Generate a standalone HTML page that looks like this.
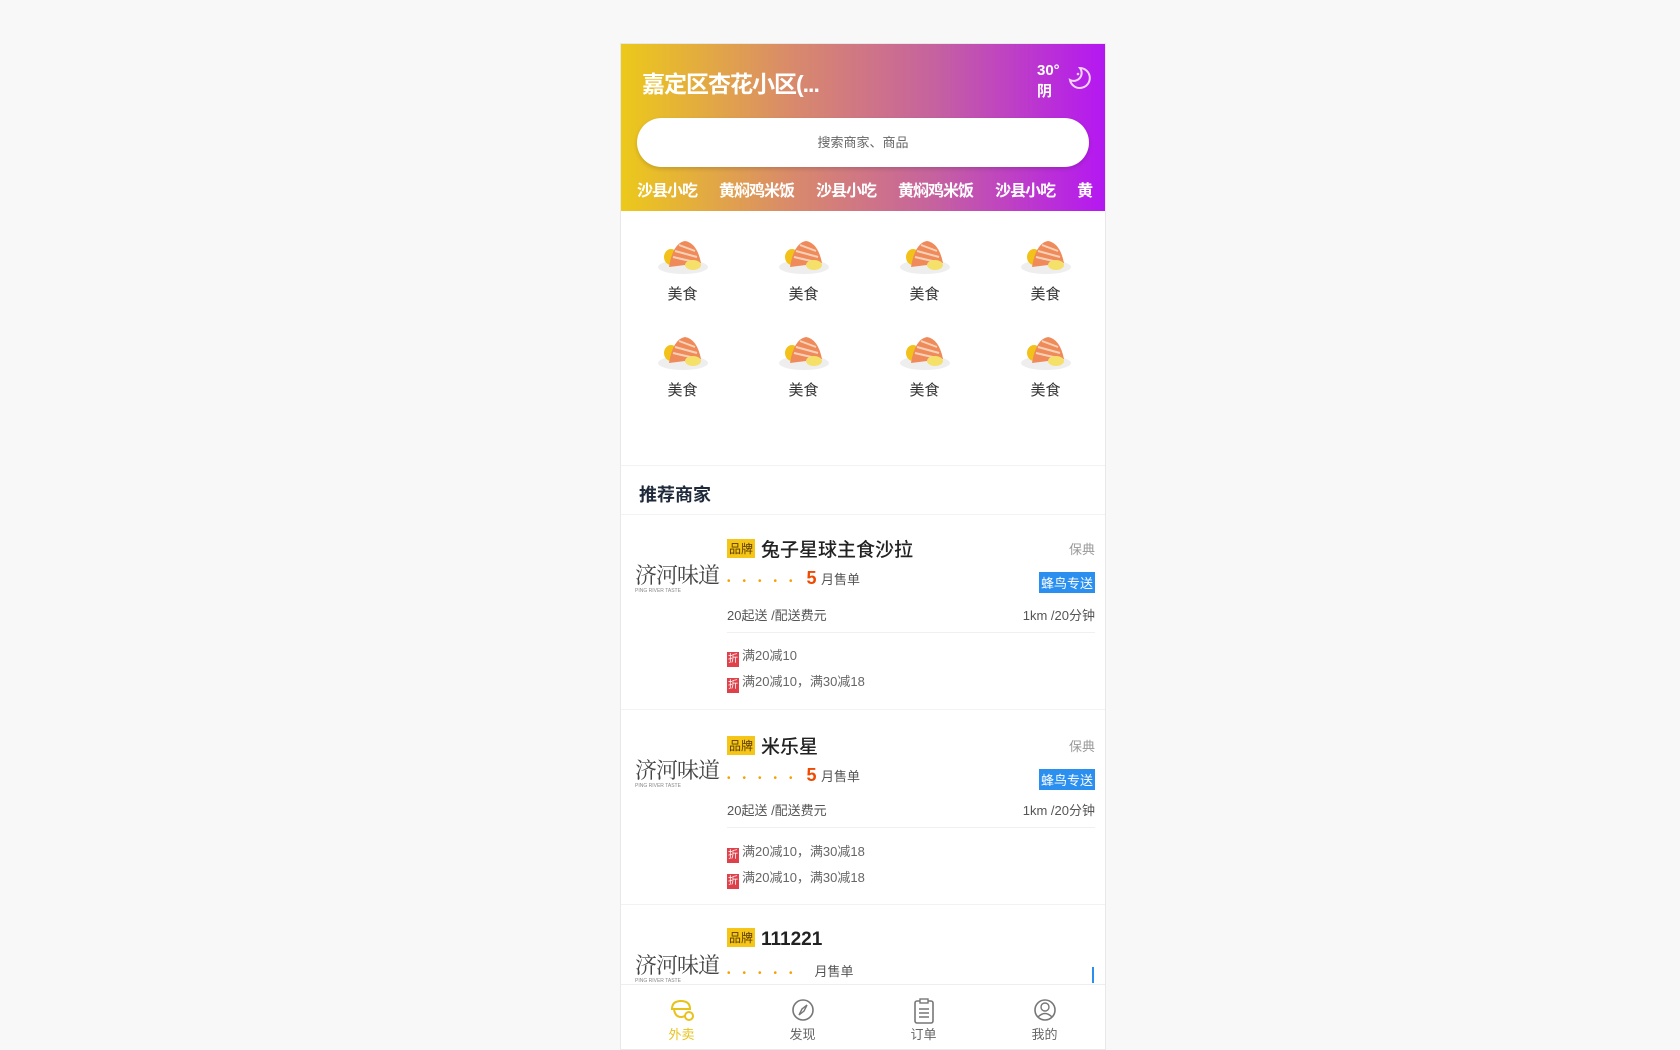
<!DOCTYPE html>
<html><head><meta charset="utf-8"><style>
*{margin:0;padding:0;box-sizing:border-box}
body{width:1680px;height:1050px;background:#f8f8f8;position:relative;overflow:hidden;font-family:"Liberation Sans","Noto Sans CJK SC",sans-serif}
.ph{position:absolute;left:620px;top:43px;width:486px;height:1007px;background:#fff;border:1px solid #e8e8e8;overflow:hidden}
.hd{position:absolute;left:0;top:0;width:486px;height:167px;background:linear-gradient(90deg,#ecc91a 0%,#d98a6b 35%,#c561a0 65%,#b416f3 100%)}
.ab{position:absolute;white-space:nowrap}
.title{left:21px;top:21px;color:#fff;font-size:23px;font-weight:bold;letter-spacing:-1px}
.srch{left:16px;top:74px;width:452px;height:49px;background:#fff;border-radius:25px;box-shadow:0 2px 4px rgba(0,0,0,.15);text-align:center;line-height:49px;font-size:13px;color:#666}
.tags{left:16px;top:133px;color:#fff;font-size:16px;font-weight:bold;letter-spacing:-1px}
.tags span{margin-right:22px}
.cell{position:absolute;width:121px;text-align:center}
.food{width:52px;height:40px;margin:0 auto;position:relative}
.lbl{font-size:15px;color:#333;margin-top:6px}
.card{position:absolute;left:0;width:486px;height:195px;border-top:1px solid #f2f2f2}
.logo{position:absolute;left:14px;font-size:22px;color:#444;font-family:"Noto Serif CJK SC",serif;letter-spacing:-1px}
.logo small{display:block;font-size:5px;color:#888;letter-spacing:0;font-family:"Liberation Sans",sans-serif;margin-top:-2px}
.pp{display:inline-block;background:#f5c518;color:#5a3b00;font-size:12px;padding:1px 2px;margin-right:6px;vertical-align:3px}
.nm{font-size:19px;color:#222;font-weight:500}
.stars{color:#f5a000;font-size:10px;letter-spacing:12px}
.five{color:#f04a00;font-size:18px;font-weight:bold;margin-left:2px}
.sm{font-size:13px;color:#555}
.fn{display:inline-block;background:#e0404a;color:#fff;font-size:10px;width:12px;height:15px;line-height:15px;text-align:center;margin-right:3px;vertical-align:-2px}
.blue{background:#2b8ff0;color:#fff;font-size:13px;padding:1px 2px}
.nav{position:absolute;left:0;top:940px;width:486px;height:67px;background:#fff;border-top:1px solid #eee}
.ni{position:absolute;width:121px;text-align:center;top:12px;font-size:13px;color:#666}
</style></head><body>
<div class="ph">
<div class="hd">
<div class="ab title">嘉定区杏花小区(...</div>
<div class="ab" style="left:416px;top:16px;color:#fff;font-size:15px;font-weight:bold;line-height:21px">30°<br>阴</div>
<div class="ab" style="left:445px;top:21px"><svg width="26" height="26" viewBox="0 0 26 26"><path d="M14 3 A10 10 0 1 1 4 15 A8 8 0 0 0 14 3Z" fill="none" stroke="#f3d5ff" stroke-width="2"/><circle cx="12" cy="9" r="1.3" fill="#f3d5ff"/></svg></div>
<div class="ab srch">搜索商家、商品</div>
<div class="ab tags"><span>沙县小吃</span><span>黄焖鸡米饭</span><span>沙县小吃</span><span>黄焖鸡米饭</span><span>沙县小吃</span><span>黄</span></div>
</div>
<div class="cell" style="left:1px;top:193px"><div class="food"><svg width="52" height="40"><ellipse cx="26" cy="30" rx="25" ry="7" fill="#eee"/><ellipse cx="14" cy="20" rx="7" ry="8" fill="#f2c21a"/><path d="M12 30 Q16 6 28 4 Q40 6 44 26 Z" fill="#ef8a5a"/><path d="M18 14 L40 20 M16 20 L42 26 M22 8 L38 14" stroke="#fbd2b8" stroke-width="2"/><ellipse cx="36" cy="28" rx="8" ry="5" fill="#f5e06a"/></svg></div><div class="lbl">美食</div></div>
<div class="cell" style="left:122px;top:193px"><div class="food"><svg width="52" height="40"><ellipse cx="26" cy="30" rx="25" ry="7" fill="#eee"/><ellipse cx="14" cy="20" rx="7" ry="8" fill="#f2c21a"/><path d="M12 30 Q16 6 28 4 Q40 6 44 26 Z" fill="#ef8a5a"/><path d="M18 14 L40 20 M16 20 L42 26 M22 8 L38 14" stroke="#fbd2b8" stroke-width="2"/><ellipse cx="36" cy="28" rx="8" ry="5" fill="#f5e06a"/></svg></div><div class="lbl">美食</div></div>
<div class="cell" style="left:243px;top:193px"><div class="food"><svg width="52" height="40"><ellipse cx="26" cy="30" rx="25" ry="7" fill="#eee"/><ellipse cx="14" cy="20" rx="7" ry="8" fill="#f2c21a"/><path d="M12 30 Q16 6 28 4 Q40 6 44 26 Z" fill="#ef8a5a"/><path d="M18 14 L40 20 M16 20 L42 26 M22 8 L38 14" stroke="#fbd2b8" stroke-width="2"/><ellipse cx="36" cy="28" rx="8" ry="5" fill="#f5e06a"/></svg></div><div class="lbl">美食</div></div>
<div class="cell" style="left:364px;top:193px"><div class="food"><svg width="52" height="40"><ellipse cx="26" cy="30" rx="25" ry="7" fill="#eee"/><ellipse cx="14" cy="20" rx="7" ry="8" fill="#f2c21a"/><path d="M12 30 Q16 6 28 4 Q40 6 44 26 Z" fill="#ef8a5a"/><path d="M18 14 L40 20 M16 20 L42 26 M22 8 L38 14" stroke="#fbd2b8" stroke-width="2"/><ellipse cx="36" cy="28" rx="8" ry="5" fill="#f5e06a"/></svg></div><div class="lbl">美食</div></div>
<div class="cell" style="left:1px;top:289px"><div class="food"><svg width="52" height="40"><ellipse cx="26" cy="30" rx="25" ry="7" fill="#eee"/><ellipse cx="14" cy="20" rx="7" ry="8" fill="#f2c21a"/><path d="M12 30 Q16 6 28 4 Q40 6 44 26 Z" fill="#ef8a5a"/><path d="M18 14 L40 20 M16 20 L42 26 M22 8 L38 14" stroke="#fbd2b8" stroke-width="2"/><ellipse cx="36" cy="28" rx="8" ry="5" fill="#f5e06a"/></svg></div><div class="lbl">美食</div></div>
<div class="cell" style="left:122px;top:289px"><div class="food"><svg width="52" height="40"><ellipse cx="26" cy="30" rx="25" ry="7" fill="#eee"/><ellipse cx="14" cy="20" rx="7" ry="8" fill="#f2c21a"/><path d="M12 30 Q16 6 28 4 Q40 6 44 26 Z" fill="#ef8a5a"/><path d="M18 14 L40 20 M16 20 L42 26 M22 8 L38 14" stroke="#fbd2b8" stroke-width="2"/><ellipse cx="36" cy="28" rx="8" ry="5" fill="#f5e06a"/></svg></div><div class="lbl">美食</div></div>
<div class="cell" style="left:243px;top:289px"><div class="food"><svg width="52" height="40"><ellipse cx="26" cy="30" rx="25" ry="7" fill="#eee"/><ellipse cx="14" cy="20" rx="7" ry="8" fill="#f2c21a"/><path d="M12 30 Q16 6 28 4 Q40 6 44 26 Z" fill="#ef8a5a"/><path d="M18 14 L40 20 M16 20 L42 26 M22 8 L38 14" stroke="#fbd2b8" stroke-width="2"/><ellipse cx="36" cy="28" rx="8" ry="5" fill="#f5e06a"/></svg></div><div class="lbl">美食</div></div>
<div class="cell" style="left:364px;top:289px"><div class="food"><svg width="52" height="40"><ellipse cx="26" cy="30" rx="25" ry="7" fill="#eee"/><ellipse cx="14" cy="20" rx="7" ry="8" fill="#f2c21a"/><path d="M12 30 Q16 6 28 4 Q40 6 44 26 Z" fill="#ef8a5a"/><path d="M18 14 L40 20 M16 20 L42 26 M22 8 L38 14" stroke="#fbd2b8" stroke-width="2"/><ellipse cx="36" cy="28" rx="8" ry="5" fill="#f5e06a"/></svg></div><div class="lbl">美食</div></div>

<div class="ab" style="left:0;top:421px;width:486px;height:1px;background:#f2f2f2"></div>
<div class="ab" style="left:18px;top:437px;font-size:18px;font-weight:bold;color:#1e2a3a">推荐商家</div>

<div class="card" style="top:470px">
<div class="logo" style="top:44px">济河味道<small>PING RIVER TASTE</small></div>
<div class="ab" style="left:106px;top:20px"><span class="pp">品牌</span><span class="nm">兔子星球主食沙拉</span></div>
<div class="ab sm" style="right:12px;top:24px;color:#999">保典</div>
<div class="ab" style="left:106px;top:53px"><span class="stars">•••••</span><span class="five">5</span> <span class="sm">月售单</span></div>
<div class="ab blue" style="right:12px;top:57px">蜂鸟专送</div>
<div class="ab sm" style="left:106px;top:90px">20起送 /配送费元</div>
<div class="ab sm" style="right:12px;top:90px">1km /20分钟</div>
<div class="ab" style="left:106px;top:117px;width:368px;height:1px;background:#f0f0f0"></div>
<div class="ab sm" style="left:106px;top:130px;color:#666"><span class="fn">折</span>满20减10</div>
<div class="ab sm" style="left:106px;top:156px;color:#666"><span class="fn">折</span>满20减10，满30减18</div>
</div>
<div class="card" style="top:665px">
<div class="logo" style="top:44px">济河味道<small>PING RIVER TASTE</small></div>
<div class="ab" style="left:106px;top:22px"><span class="pp">品牌</span><span class="nm">米乐星</span></div>
<div class="ab sm" style="right:12px;top:26px;color:#999">保典</div>
<div class="ab" style="left:106px;top:55px"><span class="stars">•••••</span><span class="five">5</span> <span class="sm">月售单</span></div>
<div class="ab blue" style="right:12px;top:59px">蜂鸟专送</div>
<div class="ab sm" style="left:106px;top:90px">20起送 /配送费元</div>
<div class="ab sm" style="right:12px;top:90px">1km /20分钟</div>
<div class="ab" style="left:106px;top:117px;width:368px;height:1px;background:#f0f0f0"></div>
<div class="ab sm" style="left:106px;top:131px;color:#666"><span class="fn">折</span>满20减10，满30减18</div>
<div class="ab sm" style="left:106px;top:157px;color:#666"><span class="fn">折</span>满20减10，满30减18</div>
</div>
<div class="card" style="top:860px">
<div class="logo" style="top:44px">济河味道<small>PING RIVER TASTE</small></div>
<div class="ab" style="left:106px;top:23px"><span class="pp">品牌</span><span class="nm" style="font-weight:bold">111221</span></div>
<div class="ab" style="left:106px;top:56px"><span class="stars">•••••</span><span class="sm" style="margin-left:10px">月售单</span></div>
<div class="ab" style="left:471px;top:62px;width:2px;height:16px;background:#2b8ff0"></div>
</div>

<div class="nav">
<div class="ni" style="left:0;color:#e8c21a"><svg width="26" height="26" viewBox="0 0 26 26"><path d="M3 12 Q3 4 12 4 Q21 4 21 12 Z M3 12 H21 M5 12 Q6 20 12 20 Q15 20 17 18" fill="none" stroke="#e8c21a" stroke-width="2"/><circle cx="20" cy="19" r="4" fill="#fff" stroke="#e8c21a" stroke-width="2"/></svg><div style="margin-top:-2px">外卖</div></div>
<div class="ni" style="left:121px"><svg width="26" height="26" viewBox="0 0 26 26"><circle cx="13" cy="13" r="10" fill="none" stroke="#777" stroke-width="1.6"/><path d="M17 8 L12 12 L9 18 L14 14 Z" fill="none" stroke="#777" stroke-width="1.4"/></svg><div style="margin-top:-2px">发现</div></div>
<div class="ni" style="left:242px"><svg width="26" height="28" viewBox="0 0 26 28"><rect x="4" y="4" width="18" height="22" rx="2" fill="none" stroke="#777" stroke-width="1.6"/><rect x="9" y="2" width="8" height="4" fill="#fff" stroke="#777" stroke-width="1.4"/><path d="M8 12 H18 M8 16 H18 M8 20 H18" stroke="#777" stroke-width="1.4"/></svg><div style="margin-top:-4px">订单</div></div>
<div class="ni" style="left:363px"><svg width="26" height="26" viewBox="0 0 26 26"><circle cx="13" cy="13" r="10" fill="none" stroke="#777" stroke-width="1.6"/><circle cx="13" cy="10" r="4" fill="none" stroke="#777" stroke-width="1.4"/><path d="M6 20 Q13 13 20 20" fill="none" stroke="#777" stroke-width="1.4"/></svg><div style="margin-top:-2px">我的</div></div>
</div>
</div>
</body></html>
